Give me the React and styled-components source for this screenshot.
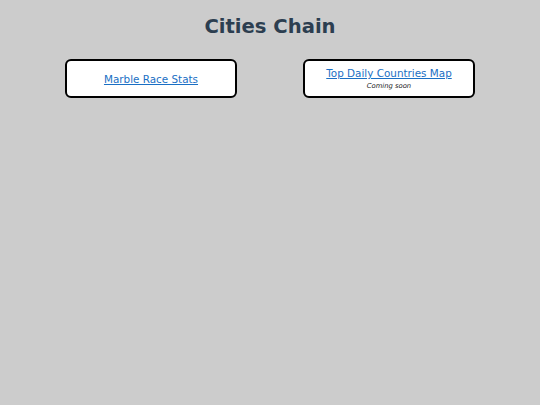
import React from "react";
import styled, { createGlobalStyle } from "styled-components";

const GlobalStyle = createGlobalStyle`
  html, body {
    margin: 0;
    padding: 0;
    background: #cccccc;
    font-family: "DejaVu Sans", Verdana, sans-serif;
  }
`;

const links = [
  { title: "Marble Race Stats", href: "#marble" },
  { title: "Top Daily Countries Map", href: "#map", note: "Coming soon" },
];

export default function App() {
  return (
    <Page>
      <GlobalStyle />
      <Title>Cities Chain</Title>
      <Cards>
        {links.map((link) => (
          <Card key={link.title}>
            <CardLink href={link.href}>{link.title}</CardLink>
            {link.note && <Note>{link.note}</Note>}
          </Card>
        ))}
      </Cards>
    </Page>
  );
}

const Page = styled.div`
  width: 540px;
  min-height: 405px;
  padding-top: 15px;
  box-sizing: border-box;
`;

const Title = styled.h1`
  margin: 0;
  text-align: center;
  font-size: 19.6px;
  font-weight: bold;
  color: #2c3e50;
  line-height: 24px;
`;

const Cards = styled.div`
  display: flex;
  justify-content: center;
  gap: 66px;
  margin-top: 20px;
`;

const Card = styled.div`
  width: 172px;
  height: 39px;
  box-sizing: border-box;
  border: 2px solid #000;
  border-radius: 6px;
  background: #fff;
  display: flex;
  flex-direction: column;
  align-items: center;
  justify-content: center;
  gap: 2px;
`;

const CardLink = styled.a`
  font-size: 10.4px;
  color: #1a6fc4;
  text-decoration: underline;
  line-height: 14px;
`;

const Note = styled.div`
  font-size: 6.8px;
  font-style: italic;
  color: #222;
  line-height: 9px;
`;
